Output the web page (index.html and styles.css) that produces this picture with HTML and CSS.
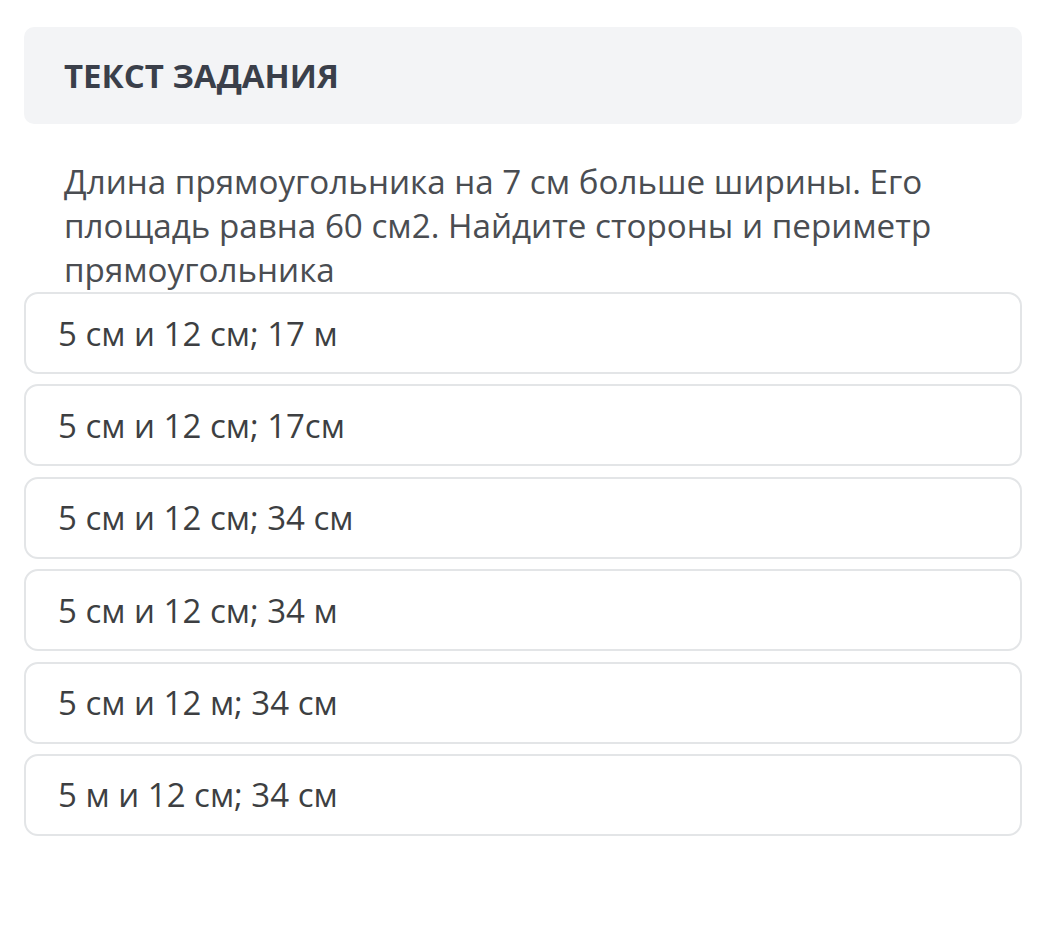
FILE: index.html
```html
<!DOCTYPE html>
<html lang="ru">
<head>
<meta charset="utf-8">
<link rel="stylesheet" href="styles.css">
</head>
<body>
<div class="page">
  <div class="header"><h2 class="title">ТЕКСТ ЗАДАНИЯ</h2></div>
  <p class="question">Длина прямоугольника на 7 см больше ширины. Его площадь равна 60 см2. Найдите стороны и периметр прямоугольника</p>
  <div class="options">
    <div class="option">5 см и 12 см; 17 м</div>
    <div class="option">5 см и 12 см; 17см</div>
    <div class="option">5 см и 12 см; 34 см</div>
    <div class="option">5 см и 12 см; 34 м</div>
    <div class="option">5 см и 12 м; 34 см</div>
    <div class="option">5 м и 12 см; 34 см</div>
  </div>
</div>
</body>
</html>
```
FILE: styles.css
```css
html, body {
  margin: 0;
  padding: 0;
  background: #ffffff;
}
body {
  font-family: "Open Sans", "Noto Sans", sans-serif;
}
.page {
  width: 998px;
  padding: 27px 0 0 24px;
}
.header {
  background: #f3f4f6;
  border-radius: 10px;
  height: 97px;
  display: flex;
  align-items: center;
  padding: 0 40px;
  box-sizing: border-box;
}
.title {
  margin: 0;
  font-size: 33px;
  font-weight: 700;
  color: #3a3f4a;
}
.question {
  margin: 36px 0 0 0;
  padding: 0 40px;
  font-size: 33.2px;
  line-height: 44px;
  color: #4a4d52;
}
.options {
  display: flex;
  flex-direction: column;
  gap: 10.4px;
}
.option {
  height: 82px;
  box-sizing: border-box;
  border: 2px solid #e3e5e7;
  border-radius: 14px;
  display: flex;
  align-items: center;
  padding: 0 32px;
  font-size: 33px;
  color: #3d3f42;
}
```
